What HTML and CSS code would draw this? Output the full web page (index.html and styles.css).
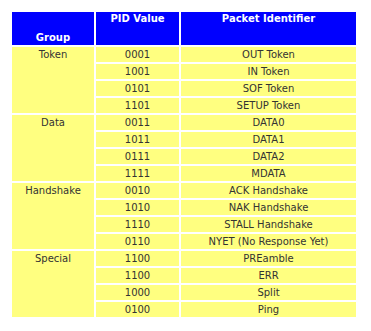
FILE: index.html
```html
<!DOCTYPE html>
<html>
<head>
<meta charset="utf-8">
<link rel="stylesheet" href="styles.css">
</head>
<body>
<table class="pid">
  <thead>
    <tr>
      <th class="group-h">Group</th>
      <th class="pid-h">PID Value</th>
      <th class="name-h">Packet Identifier</th>
    </tr>
  </thead>
  <tbody>
    <tr><td class="grp" rowspan="4">Token</td><td>0001</td><td>OUT Token</td></tr>
    <tr><td>1001</td><td>IN Token</td></tr>
    <tr><td>0101</td><td>SOF Token</td></tr>
    <tr><td>1101</td><td>SETUP Token</td></tr>
    <tr><td class="grp" rowspan="4">Data</td><td>0011</td><td>DATA0</td></tr>
    <tr><td>1011</td><td>DATA1</td></tr>
    <tr><td>0111</td><td>DATA2</td></tr>
    <tr><td>1111</td><td>MDATA</td></tr>
    <tr><td class="grp" rowspan="4">Handshake</td><td>0010</td><td>ACK Handshake</td></tr>
    <tr><td>1010</td><td>NAK Handshake</td></tr>
    <tr><td>1110</td><td>STALL Handshake</td></tr>
    <tr><td>0110</td><td>NYET (No Response Yet)</td></tr>
    <tr><td class="grp" rowspan="4">Special</td><td>1100</td><td>PREamble</td></tr>
    <tr><td>1100</td><td>ERR</td></tr>
    <tr><td>1000</td><td>Split</td></tr>
    <tr><td>0100</td><td>Ping</td></tr>
  </tbody>
</table>
</body>
</html>
```
FILE: styles.css
```css
html, body {
  margin: 0;
  padding: 0;
  background: #ffffff;
}
body {
  padding: 10px;
  font-family: "DejaVu Sans", Verdana, sans-serif;
  font-size: 10px;
  color: #333333;
}
.pid {
  border-collapse: separate;
  border-spacing: 2px;
  table-layout: fixed;
  width: 348px;
}
.pid th {
  background: #0000ff;
  color: #ffffff;
  font-weight: bold;
  height: 33px;
  padding: 0;
  line-height: 14px;
  text-align: center;
}
.group-h {
  width: 82px;
  vertical-align: bottom;
}
.pid-h {
  width: 83px;
  vertical-align: top;
}
.name-h {
  vertical-align: top;
}
.pid td {
  background: #ffff80;
  height: 15px;
  padding: 0;
  text-align: center;
  vertical-align: middle;
  line-height: 15px;
}
.pid td.grp {
  vertical-align: top;
}
```
